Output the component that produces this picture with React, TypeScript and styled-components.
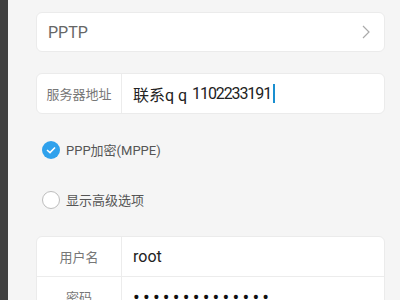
import React from "react";
import styled, { createGlobalStyle } from "styled-components";

const GlobalStyle = createGlobalStyle`
  html, body {
    margin: 0;
    padding: 0;
    background: #f5f5f5;
    font-family: Roboto, "Noto Sans CJK SC", sans-serif;
  }
`;

const Screen = styled.div`
  display: flex;
  width: 400px;
  height: 300px;
  overflow: hidden;
  background: #f5f5f5;
`;

const SideStrip = styled.div`
  width: 8px;
  flex-shrink: 0;
  background: #404040;
`;

const Content = styled.div`
  flex: 1;
  display: flex;
  flex-direction: column;
  padding: 12px 15px 0 28px;

  & > * {
    flex-shrink: 0;
  }
`;

const Card = styled.div<{ $mt?: number }>`
  background: #fff;
  border: 1px solid #ebebeb;
  border-radius: 6px;
  margin-top: ${(p) => p.$mt ?? 0}px;
  overflow: hidden;
`;

const SelectRow = styled.div`
  height: 38px;
  display: flex;
  align-items: center;
  justify-content: space-between;
  padding: 0 14px 0 11px;
  font-size: 16px;
  color: #666;
`;

const FieldRow = styled.div<{ $divider?: boolean }>`
  height: 39px;
  display: flex;
  align-items: stretch;
  border-bottom: ${(p) => (p.$divider ? "1px solid #ececec" : "none")};
`;

const Label = styled.div`
  width: 84px;
  flex-shrink: 0;
  display: flex;
  align-items: center;
  justify-content: center;
  border-right: 1px solid #ececec;
  font-size: 13px;
  color: #777;
`;

const Value = styled.div`
  flex: 1;
  display: flex;
  align-items: center;
  padding-left: 11px;
  font-size: 16px;
  color: #222;
  white-space: pre;
`;

const Digits = styled.span`
  letter-spacing: -1.1px;
  margin-left: -3px;
`;

const Caret = styled.span`
  display: inline-block;
  width: 1.5px;
  height: 19px;
  background: #1a8fd0;
  margin-left: 2px;
`;

const Dots = styled.span`
  font-size: 20px;
  letter-spacing: 3.2px;
  color: #111;
`;

const OptionRow = styled.div<{ $mt: number }>`
  display: flex;
  align-items: center;
  gap: 6px;
  margin-top: ${(p) => p.$mt}px;
  padding-left: 6px;
  font-size: 13px;
  color: #555;
`;

const Circle = styled.div<{ $checked?: boolean }>`
  width: 18px;
  height: 18px;
  border-radius: 50%;
  box-sizing: border-box;
  display: flex;
  align-items: center;
  justify-content: center;
  background: ${(p) => (p.$checked ? "#2fa1ec" : "#fff")};
  border: ${(p) => (p.$checked ? "none" : "1px solid #bdbdbd")};
`;

const Chevron = () => (
  <svg width="8" height="14" viewBox="0 0 8 14">
    <path d="M1 1 L7 7 L1 13" fill="none" stroke="#aaa" strokeWidth="1.2" />
  </svg>
);

const Check = () => (
  <svg width="10" height="8" viewBox="0 0 10 8">
    <path d="M1 4 L4 6.6 L9 1.4" fill="none" stroke="#fff" strokeWidth="1.5" />
  </svg>
);

const App = () => (
  <>
    <GlobalStyle />
    <Screen>
      <SideStrip />
      <Content>
        <Card>
          <SelectRow>
            <span>PPTP</span>
            <Chevron />
          </SelectRow>
        </Card>
        <Card $mt={21}>
          <FieldRow>
            <Label>服务器地址</Label>
            <Value>
              联系q q  <Digits>1102233191</Digits>
              <Caret />
            </Value>
          </FieldRow>
        </Card>
        <OptionRow $mt={26}>
          <Circle $checked>
            <Check />
          </Circle>
          <span>PPP加密(MPPE)</span>
        </OptionRow>
        <OptionRow $mt={31}>
          <Circle />
          <span>显示高级选项</span>
        </OptionRow>
        <Card $mt={27}>
          <FieldRow $divider>
            <Label>用户名</Label>
            <Value>root</Value>
          </FieldRow>
          <FieldRow>
            <Label>密码</Label>
            <Value>
              <Dots>••••••••••••••</Dots>
            </Value>
          </FieldRow>
        </Card>
      </Content>
    </Screen>
  </>
);

export default App;
